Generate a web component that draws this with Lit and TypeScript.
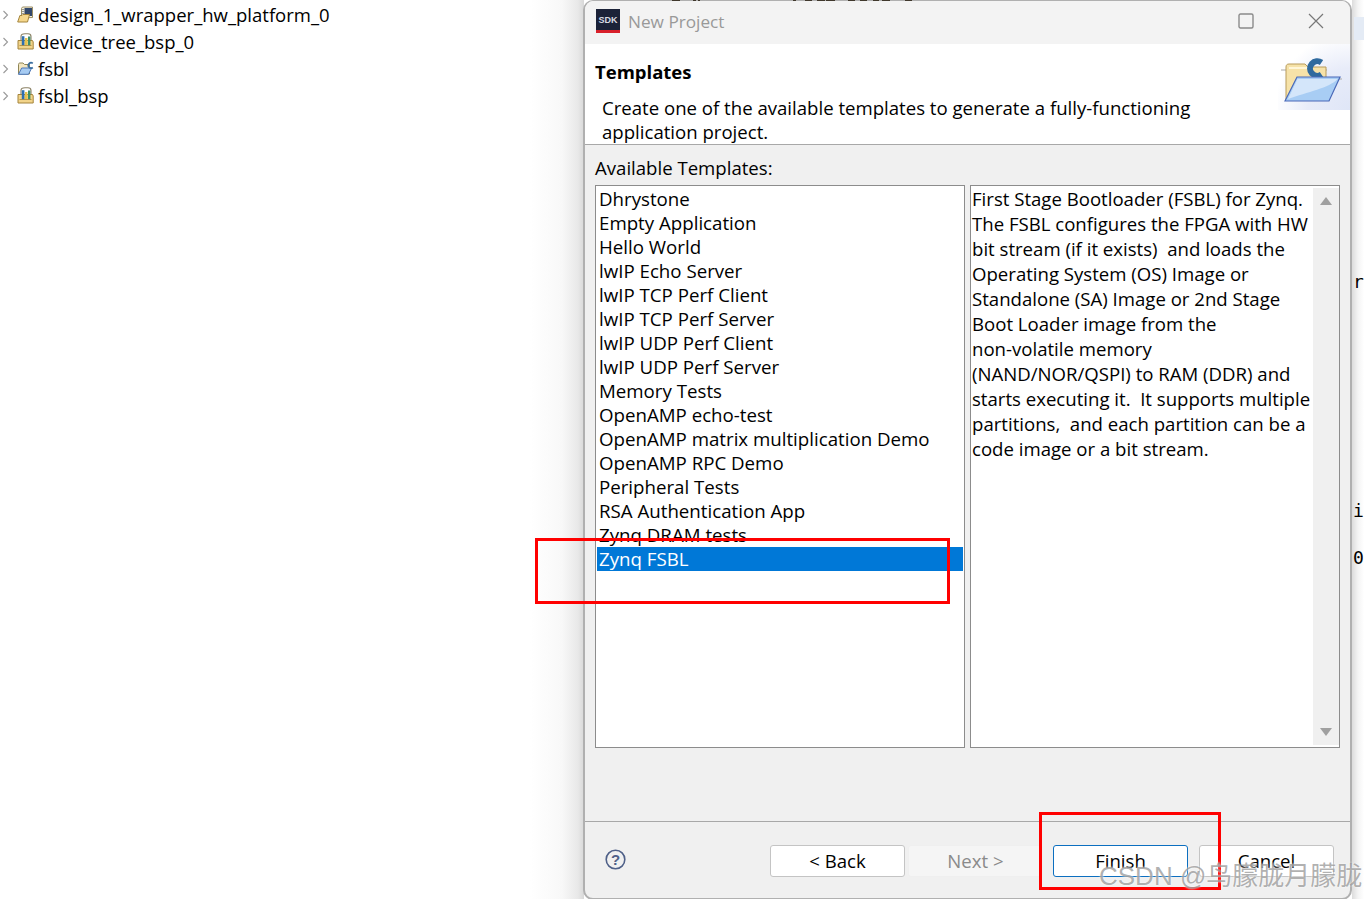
import { LitElement, html, css, svg } from "lit";
import { customElement } from "lit/decorators.js";

const TREE = [
  { name: "design_1_wrapper_hw_platform_0", icon: "hw" },
  { name: "device_tree_bsp_0", icon: "bsp" },
  { name: "fsbl", icon: "app" },
  { name: "fsbl_bsp", icon: "bsp" },
];
const TEMPLATES = [
  "Dhrystone", "Empty Application", "Hello World", "lwIP Echo Server", "lwIP TCP Perf Client",
  "lwIP TCP Perf Server", "lwIP UDP Perf Client", "lwIP UDP Perf Server", "Memory Tests",
  "OpenAMP echo-test", "OpenAMP matrix multiplication Demo", "OpenAMP RPC Demo", "Peripheral Tests",
  "RSA Authentication App", "Zynq DRAM tests", "Zynq FSBL",
];
const DESC = [
  "First Stage Bootloader (FSBL) for Zynq.", "The FSBL configures the FPGA with HW",
  "bit stream (if it exists)  and loads the", "Operating System (OS) Image or",
  "Standalone (SA) Image or 2nd Stage", "Boot Loader image from the", "non-volatile memory",
  "(NAND/NOR/QSPI) to RAM (DDR) and", "starts executing it.  It supports multiple",
  "partitions,  and each partition can be a", "code image or a bit stream.",
];
/* descender bits of text behind the dialog, poking out over its top edge: [x, width] */
const TOP_BITS = [[672, 8], [693, 3], [698, 2], [793, 3], [805, 7], [817, 8], [826, 9], [848, 7], [860, 7], [873, 6], [882, 8], [905, 7]];

function treeIcon(kind: string) {
  if (kind === "hw") return html`<svg viewBox="0 0 17 17" width="17" height="17">
    <path d="M4.5 12V2.5l1-1.500h10v10.500z" fill="#f6f1dc" stroke="#9c8f66"/>
    <rect x="7.500" y="2" width="7.500" height="8" fill="#33486c"/>
    <path d="M5 3.500h2.500M5 5.500h2.500M5 7.500h2.500" stroke="#8d8d8d" stroke-width=".9"/>
    <path d="M.7 16l2.200-6.500h2l1-1h6.600l-2 7.500z" fill="#f5d78c" stroke="#a4843c"/>
  </svg>`;
  if (kind === "bsp") return html`<svg viewBox="0 0 17 17" width="17" height="17">
    <path d="M4 8V3.500C4 1.500 6 .8 8 .8h3c2 0 3 1 3 2.700V8" fill="none" stroke="#8c8266" stroke-width="1.100"/>
    <path d="M1 16V7.500h14.500l.7 1.500v7z" fill="#f2d48a" stroke="#a4843c"/>
    <rect x="4.800" y="3.200" width="2.600" height="9.300" fill="#2f6fb0"/>
    <rect x="8" y="5" width="2.400" height="7.500" fill="#e8c24a"/>
    <rect x="11" y="3.500" width="2.400" height="9" fill="#3f8f6a"/>
    <path d="M2.500 12.500h12" stroke="#a4843c" stroke-width=".8"/>
  </svg>`;
  return html`<svg viewBox="0 0 17 17" width="17" height="17">
    <path d="M1.500 14V4.500c0-1 .5-1.500 1.500-1.500h3l1.500 1.500h5V14z" fill="#f2e6c0" stroke="#8f8556"/>
    <path d="M1.500 14.300l3.200-6.300h10l-3.200 6.300z" fill="#a6cbf2" stroke="#4d77b8"/>
    <path d="M15.800 3.300a2.700 2.700 0 1 0 0 4.200" fill="none" stroke="#3a6d9f" stroke-width="1.700"/>
  </svg>`;
}

const bannerArt = svg`
  <path d="M3 26h46M60 35h4" stroke="#a9a9a9" stroke-width="1.200"/>
  <path d="M8 56V23c0-2 1-3 3-3h16l3 3h18v33z" fill="#f6e2a8" stroke="#b89b5a"/>
  <path d="M11 24h20" stroke="#fff6d8" stroke-width="2"/>
  <path d="M43.500 18.500a7.300 7.300 0 1 0 0 12" fill="none" stroke="#2f6a9e" stroke-width="6"/>
  <path d="M7 57l12-24h43l-11 24z" fill="#a8cdf4" stroke="#4a69b8" stroke-width="1.200"/>
  <path d="M10 55l9.500-20h40c-8 9-30 13-49.500 20z" fill="#d4e6fa"/>
`;

@customElement("app-root")
export class AppRoot extends LitElement {
  static styles = css`
    :host {
      display: flex;
      position: relative;
      width: 1364px;
      height: 899px;
      overflow: hidden;
      background: #fff;
      font-family: "Open Sans", "Noto Sans", sans-serif;
      font-size: 18.6px;
      color: #000;
    }
    .tree {
      flex: 0 0 584px;
      padding-top: 1px;
      box-sizing: border-box;
      background: linear-gradient(to right, #fff 530px, #f8f8f8 562px, #e8e8e8 578px, #d8d8d8 584px);
    }
    .tree-row { display: flex; align-items: center; height: 27px; }
    .chev { width: 17px; display: flex; justify-content: flex-start; padding-left: 2px; box-sizing: border-box; }
    .tree-icon { width: 21px; display: flex; }
    .tree-name { font-size: 18.5px; }

    .dialog {
      flex: 0 0 768px;
      box-sizing: border-box;
      height: 900px;
      margin-left: -1px;
      width: 769px;
      flex-basis: 769px;
      border: 2px solid #b0b0b0;
      border-top-width: 1px;
      border-radius: 10px;
      background: #f0f0f0;
      display: flex;
      flex-direction: column;
      overflow: hidden;
    }
    .titlebar { height: 43px; flex: none; box-sizing: border-box; padding: 0 0 3px 11px; background: #f3f3f3; display: flex; align-items: center; color: #999; font-size: 17.2px; }
    .sdk { width: 24px; height: 24px; margin-right: 8px; background: #1b2238; border-bottom: 3px solid #d8202a; box-sizing: border-box; color: #d8dbe2; font: bold 9px "Liberation Sans", sans-serif; display: flex; align-items: center; justify-content: center; }
    .title { flex: 1; }
    .win-btn { width: 71px; height: 40px; display: flex; align-items: center; justify-content: center; }
    .win-btn.close { width: 69px; }
    .header { height: 101px; flex: none; box-sizing: border-box; background: #fff; border-bottom: 1px solid #a8a8a8; position: relative; padding: 15px 0 0 10px; overflow: hidden; }
    .header h1 { margin: 0; font-size: 18.5px; font-weight: 700; line-height: 26px; }
    .header p { margin: 11px 0 0 7px; line-height: 24px; }
    .banner { position: absolute; right: 0; top: 0; width: 72px; height: 66px; background: radial-gradient(circle 76px at 100% 100%, #dfe6f7 0%, #e8ecf9 55%, #fff 100%); }
    .banner svg { display: block; overflow: visible; }
    .body { flex: 1; padding: 11px 10px 0 10px; min-height: 0; }
    .label { line-height: 24px; height: 29px; }
    .panes { display: flex; gap: 5px; height: 563px; }
    .pane { box-sizing: border-box; border: 1px solid #8c8c8c; background: #fff; width: 370px; height: 563px; }
    .list { padding: 1px; font-size: 18.7px; }
    .item { height: 24px; line-height: 24px; padding-left: 2px; white-space: nowrap; }
    .item.sel { background: #0078d7; color: #fff; }
    .desc { display: flex; }
    .desc-text { flex: 1; padding: 0 0 0 1px; }
    .desc-line { height: 25px; line-height: 25px; white-space: pre; }
    .scroll { width: 26px; background: #f0f0f0; margin: 2px 0; display: flex; flex-direction: column; justify-content: space-between; align-items: center; padding: 9px 0; box-sizing: border-box; }
    .footer { height: 77px; flex: none; border-top: 1px solid #a8a8a8; display: flex; align-items: flex-start; padding: 23px 16px 0 20px; box-sizing: border-box; }
    .help { margin-top: 4px; flex: 1; display: flex; }
    .btn { box-sizing: border-box; width: 135px; height: 32px; line-height: 28px; border: 1px solid #c4c4c4; border-radius: 3px; background: #fff; display: flex; align-items: center; justify-content: center; margin-left: 3px; }
    .btn.dis { background: #f5f5f5; border-color: #efefef; color: #8a8a8a; }
    .btn.def { border-color: #0c6fc0; margin-left: 10px; }
    .btn.cancel { margin-left: 11px; }

    .strip { flex: 1; position: relative; background: linear-gradient(to right, #dcdcdc, #f4f4f4 6px, #fff 12px); font: 18px "DejaVu Sans Mono", monospace; }
    .frag { position: absolute; left: 1px; line-height: 20px; }
    .tint { position: absolute; left: 2px; right: 0; top: 17px; height: 23px; background: #e4ebf5; }

    .bit { position: absolute; top: 0; height: 1px; background: #40382c; }
    .mark { position: absolute; border: 3px solid #f00; box-sizing: border-box; pointer-events: none; }
    .mark.a { left: 535px; top: 538px; width: 415px; height: 66px; }
    .mark.b { left: 1039px; top: 812px; width: 182px; height: 78px; }
    .watermark { position: absolute; left: 1099px; top: 859px; font-size: 26px; line-height: 34px; white-space: nowrap; color: rgba(110,110,110,.55); text-shadow: 0 0 2px #fff; font-family: "Liberation Sans", "Noto Sans CJK SC", sans-serif; }
  `;

  render() {
    return html`
      <div class="tree">
        ${TREE.map((t) => html`<div class="tree-row">
          <span class="chev"><svg width="8" height="12" viewBox="0 0 8 12"><path d="M1.500 2l4 4-4 4" fill="none" stroke="#9a9a9a" stroke-width="1.100"/></svg></span>
          <span class="tree-icon">${treeIcon(t.icon)}</span>
          <span class="tree-name">${t.name}</span>
        </div>`)}
      </div>
      <div class="dialog">
        <div class="titlebar">
          <span class="sdk">SDK</span>
          <span class="title">New Project</span>
          <span class="win-btn"><svg width="16" height="16" viewBox="0 0 16 16"><rect x="1" y="1" width="14" height="14" rx="1.500" fill="none" stroke="#8a8a8a" stroke-width="1.400"/></svg></span>
          <span class="win-btn close"><svg width="16" height="16" viewBox="0 0 16 16"><path d="M1 1l14 14M15 1L1 15" stroke="#777" stroke-width="1.200"/></svg></span>
        </div>
        <div class="header">
          <h1>Templates</h1>
          <p>Create one of the available templates to generate a fully-functioning<br />application project.</p>
          <div class="banner"><svg width="72" height="66" viewBox="0 0 72 66">${bannerArt}</svg></div>
        </div>
        <div class="body">
          <div class="label">Available Templates:</div>
          <div class="panes">
            <div class="pane list">
              ${TEMPLATES.map((t, i) => html`<div class="item ${i === 15 ? "sel" : ""}">${t}</div>`)}
            </div>
            <div class="pane desc">
              <div class="desc-text">${DESC.map((d) => html`<div class="desc-line">${d}</div>`)}</div>
              <div class="scroll">
                <svg width="12" height="8" viewBox="0 0 12 8"><path d="M6 0l6 8H0z" fill="#a0a0a0"/></svg>
                <svg width="12" height="8" viewBox="0 0 12 8"><path d="M6 8l6-8H0z" fill="#a0a0a0"/></svg>
              </div>
            </div>
          </div>
        </div>
        <div class="footer">
          <span class="help"><svg width="21" height="21" viewBox="0 0 21 21"><circle cx="10.500" cy="10.500" r="9.300" fill="none" stroke="#4f6088" stroke-width="1.600"/><text x="10.500" y="16" text-anchor="middle" font-size="15" font-weight="700" fill="#4f6088" font-family="Liberation Sans, sans-serif">?</text></svg></span>
          <div class="btn">&lt; Back</div>
          <div class="btn dis">Next &gt;</div>
          <div class="btn def">Finish</div>
          <div class="btn cancel">Cancel</div>
        </div>
      </div>
      <div class="strip">
        <div class="tint"></div>
        <div class="frag" style="top:272px">r</div>
        <div class="frag" style="top:501px">i</div>
        <div class="frag" style="top:548px">0</div>
      </div>
      ${TOP_BITS.map(([x, w]) => html`<div class="bit" style="left:${x}px;width:${w}px"></div>`)}
      <div class="mark a"></div>
      <div class="mark b"></div>
      <div class="watermark">CSDN @鸟朦胧月朦胧</div>
    `;
  }
}
